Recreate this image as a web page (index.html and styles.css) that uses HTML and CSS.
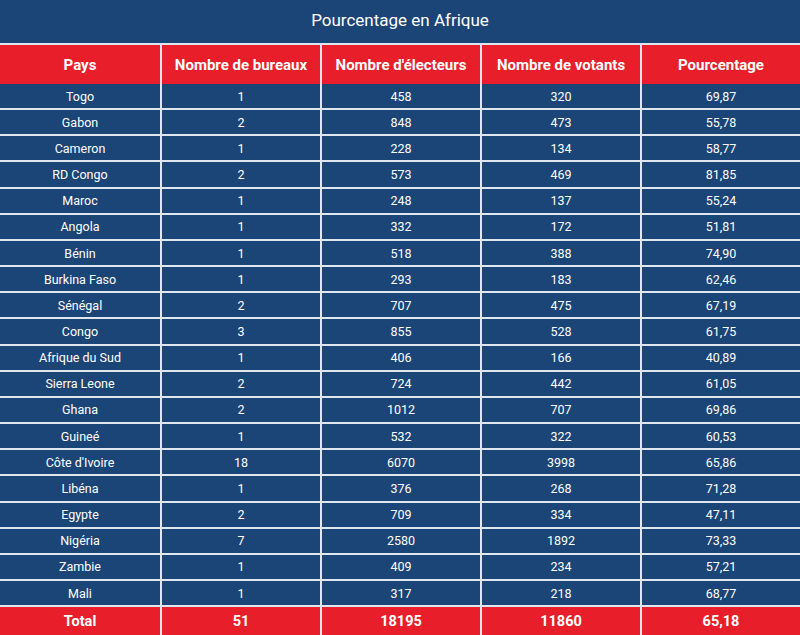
FILE: index.html
```html
<!DOCTYPE html>
<html lang="fr">
<head>
<meta charset="utf-8">
<title>Pourcentage en Afrique</title>
<link rel="stylesheet" href="styles.css">
</head>
<body>
<div class="title">Pourcentage en Afrique</div>
<table class="grid">
  <colgroup><col><col><col><col><col></colgroup>
  <thead>
    <tr><th>Pays</th><th>Nombre de bureaux</th><th>Nombre d'électeurs</th><th>Nombre de votants</th><th>Pourcentage</th></tr>
  </thead>
  <tbody>
    <tr><td>Togo</td><td>1</td><td>458</td><td>320</td><td>69,87</td></tr>
    <tr><td>Gabon</td><td>2</td><td>848</td><td>473</td><td>55,78</td></tr>
    <tr><td>Cameron</td><td>1</td><td>228</td><td>134</td><td>58,77</td></tr>
    <tr><td>RD Congo</td><td>2</td><td>573</td><td>469</td><td>81,85</td></tr>
    <tr><td>Maroc</td><td>1</td><td>248</td><td>137</td><td>55,24</td></tr>
    <tr><td>Angola</td><td>1</td><td>332</td><td>172</td><td>51,81</td></tr>
    <tr><td>Bénin</td><td>1</td><td>518</td><td>388</td><td>74,90</td></tr>
    <tr><td>Burkina Faso</td><td>1</td><td>293</td><td>183</td><td>62,46</td></tr>
    <tr><td>Sénégal</td><td>2</td><td>707</td><td>475</td><td>67,19</td></tr>
    <tr><td>Congo</td><td>3</td><td>855</td><td>528</td><td>61,75</td></tr>
    <tr><td>Afrique du Sud</td><td>1</td><td>406</td><td>166</td><td>40,89</td></tr>
    <tr><td>Sierra Leone</td><td>2</td><td>724</td><td>442</td><td>61,05</td></tr>
    <tr><td>Ghana</td><td>2</td><td>1012</td><td>707</td><td>69,86</td></tr>
    <tr><td>Guineé</td><td>1</td><td>532</td><td>322</td><td>60,53</td></tr>
    <tr><td>Côte d'Ivoire</td><td>18</td><td>6070</td><td>3998</td><td>65,86</td></tr>
    <tr><td>Libéna</td><td>1</td><td>376</td><td>268</td><td>71,28</td></tr>
    <tr><td>Egypte</td><td>2</td><td>709</td><td>334</td><td>47,11</td></tr>
    <tr><td>Nigéria</td><td>7</td><td>2580</td><td>1892</td><td>73,33</td></tr>
    <tr><td>Zambie</td><td>1</td><td>409</td><td>234</td><td>57,21</td></tr>
    <tr><td>Mali</td><td>1</td><td>317</td><td>218</td><td>68,77</td></tr>
  </tbody>
  <tfoot>
    <tr><td>Total</td><td>51</td><td>18195</td><td>11860</td><td>65,18</td></tr>
  </tfoot>
</table>
</body>
</html>
```

FILE: styles.css
```css
html, body {
  margin: 0;
  padding: 0;
  background: #1b4576;
  font-family: Roboto, "Liberation Sans", sans-serif;
  color: #ffffff;
}

.title {
  height: 43px;
  line-height: 41px;
  text-align: center;
  font-size: 17px;
  font-weight: 400;
  background: #1b4576;
  border-bottom: 2px solid #dfe6ee;
}

.grid {
  width: 800px;
  table-layout: fixed;
  border-collapse: separate;
  border-spacing: 0;
}

.grid col {
  width: 160px;
}

.grid th,
.grid td {
  padding: 0;
  text-align: center;
  border-left: 2px solid #dfe6ee;
  white-space: nowrap;
}

.grid th:first-child,
.grid td:first-child {
  border-left: none;
}

.grid th {
  height: 39px;
  background: #e81f2a;
  font-size: 15px;
  font-weight: 700;
}

.grid tbody td {
  height: 24.17px;
  background: #1b4576;
  border-bottom: 2px solid #dfe6ee;
  font-size: 12.5px;
  font-weight: 400;
}

.grid tfoot td {
  height: 28px;
  background: #e81f2a;
  font-size: 14.5px;
  font-weight: 700;
}
```
